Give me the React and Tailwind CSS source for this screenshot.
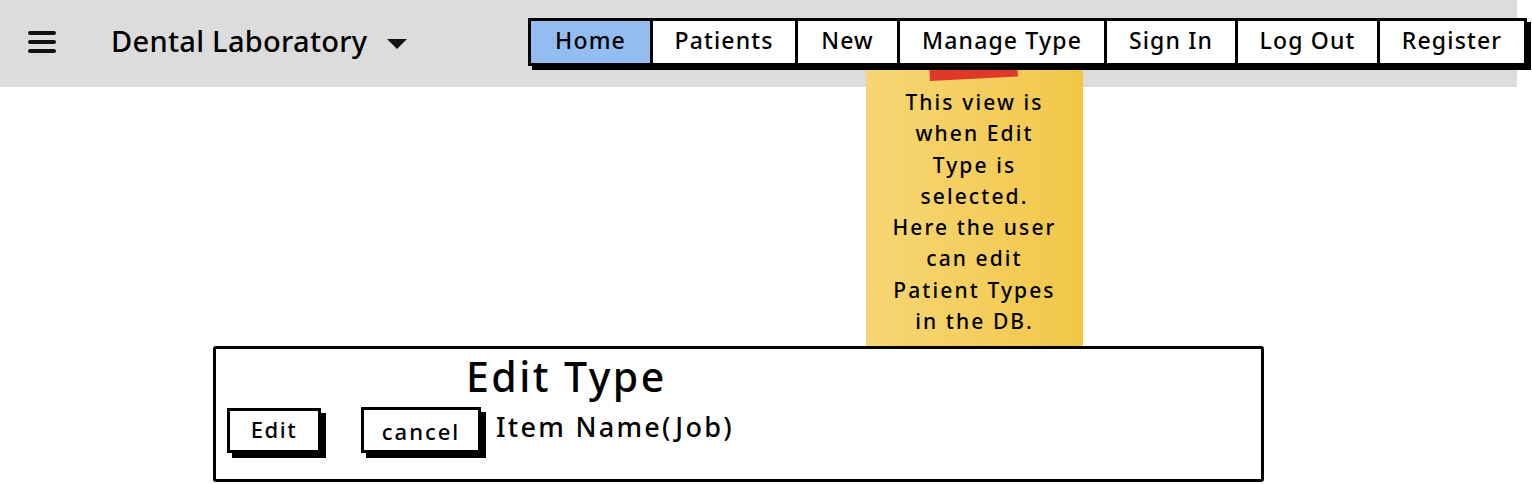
import React from 'react'

const tabs = [
    { label: 'Home', w: 'w-[119px]', active: true },
    { label: 'Patients', w: 'w-[145px]' },
    { label: 'New', w: 'w-[102px]' },
    { label: 'Manage Type', w: 'w-[207px]' },
    { label: 'Sign In', w: 'w-[131px]' },
    { label: 'Log Out', w: 'w-[142px]' },
    { label: 'Register', w: 'w-[147px]' },
]

const noteLines = [
    'This view is',
    'when Edit',
    'Type is',
    'selected.',
    'Here the user',
    'can edit',
    'Patient Types',
    'in the DB.',
]

const App = () => {
    return (
        <div className="relative w-[1532px] h-[484px] bg-white overflow-hidden text-black" style={{ fontFamily: '"Noto Sans", sans-serif' }}>
            {/* header bar */}
            <header className="h-[87px] w-[1517px] bg-[#dcdcdc] flex items-start">
                <div className="flex items-center h-[84px] pl-[28px]">
                    <svg width="29" height="24" viewBox="0 0 29 24" className="shrink-0">
                        <rect x="0" y="1" width="28" height="4" rx="2" fill="#111" />
                        <rect x="0" y="10" width="28" height="4" rx="2" fill="#111" />
                        <rect x="0" y="19" width="28" height="4" rx="2" fill="#111" />
                    </svg>
                    <span className="ml-[54px] pb-[3px] text-[29px] leading-none font-medium tracking-[0.01em]">Dental Laboratory</span>
                    <svg width="20" height="11" viewBox="0 0 20 11" className="ml-[20px] mt-[4px]">
                        <path d="M0 0 H20 L10 10 Z" fill="#111" />
                    </svg>
                </div>

                {/* nav tabs */}
                <nav className="relative z-20 ml-auto mr-[-10px] mt-[18px] flex h-[48px] border-[3px] border-black bg-white shadow-[4px_4px_0_#000]">
                    {tabs.map((t, i) => (
                        <div
                            key={t.label}
                            className={`${t.w} flex items-center justify-center pb-[4px] text-[23px] leading-none font-medium tracking-[0.05em] ${i > 0 ? 'border-l-[3px] border-black' : ''} ${t.active ? 'bg-[#93bdf0]' : 'bg-white'}`}
                        >
                            {t.label}
                        </div>
                    ))}
                </nav>
            </header>

            {/* sticky note */}
            <div className="absolute z-10 left-[866px] top-[65px] w-[217px] h-[285px] bg-gradient-to-r from-[#f6d674] to-[#f2c746]">
                <div className="absolute left-[64px] top-0 w-[88px] h-[16px] bg-[#e0392a] -rotate-3 origin-bottom-left" />
                <div className="pt-[22px] text-center text-[21px] leading-[31.3px] font-medium tracking-[0.1em]">
                    {noteLines.map((l) => (
                        <div key={l}>{l}</div>
                    ))}
                </div>
            </div>

            {/* edit type panel */}
            <section className="relative z-10 ml-[213px] mt-[259px] w-[1051px] h-[136px] border-[3px] border-black rounded-[3px] bg-white">
                <h1 className="ml-[250px] mt-[4px] text-[41px] leading-[46px] font-medium tracking-[0.06em]">Edit Type</h1>
                <div className="flex items-center mt-[8px] ml-[11px]">
                    <button className="w-[94px] h-[45px] border-[3px] border-black bg-white shadow-[5px_5px_0_#000] text-[22px] leading-none font-medium tracking-[0.07em] pb-[3px]">
                        Edit
                    </button>
                    <button className="ml-[40px] w-[120px] h-[46px] border-[3px] border-black bg-white shadow-[5px_5px_0_#000] text-[22px] leading-none font-medium tracking-[0.09em] pt-[1px]">
                        cancel
                    </button>
                    <span className="ml-[15px] -mt-[8px] text-[27px] leading-none font-medium tracking-[0.085em]">Item Name(Job)</span>
                </div>
            </section>
        </div>
    )
}

export default App
